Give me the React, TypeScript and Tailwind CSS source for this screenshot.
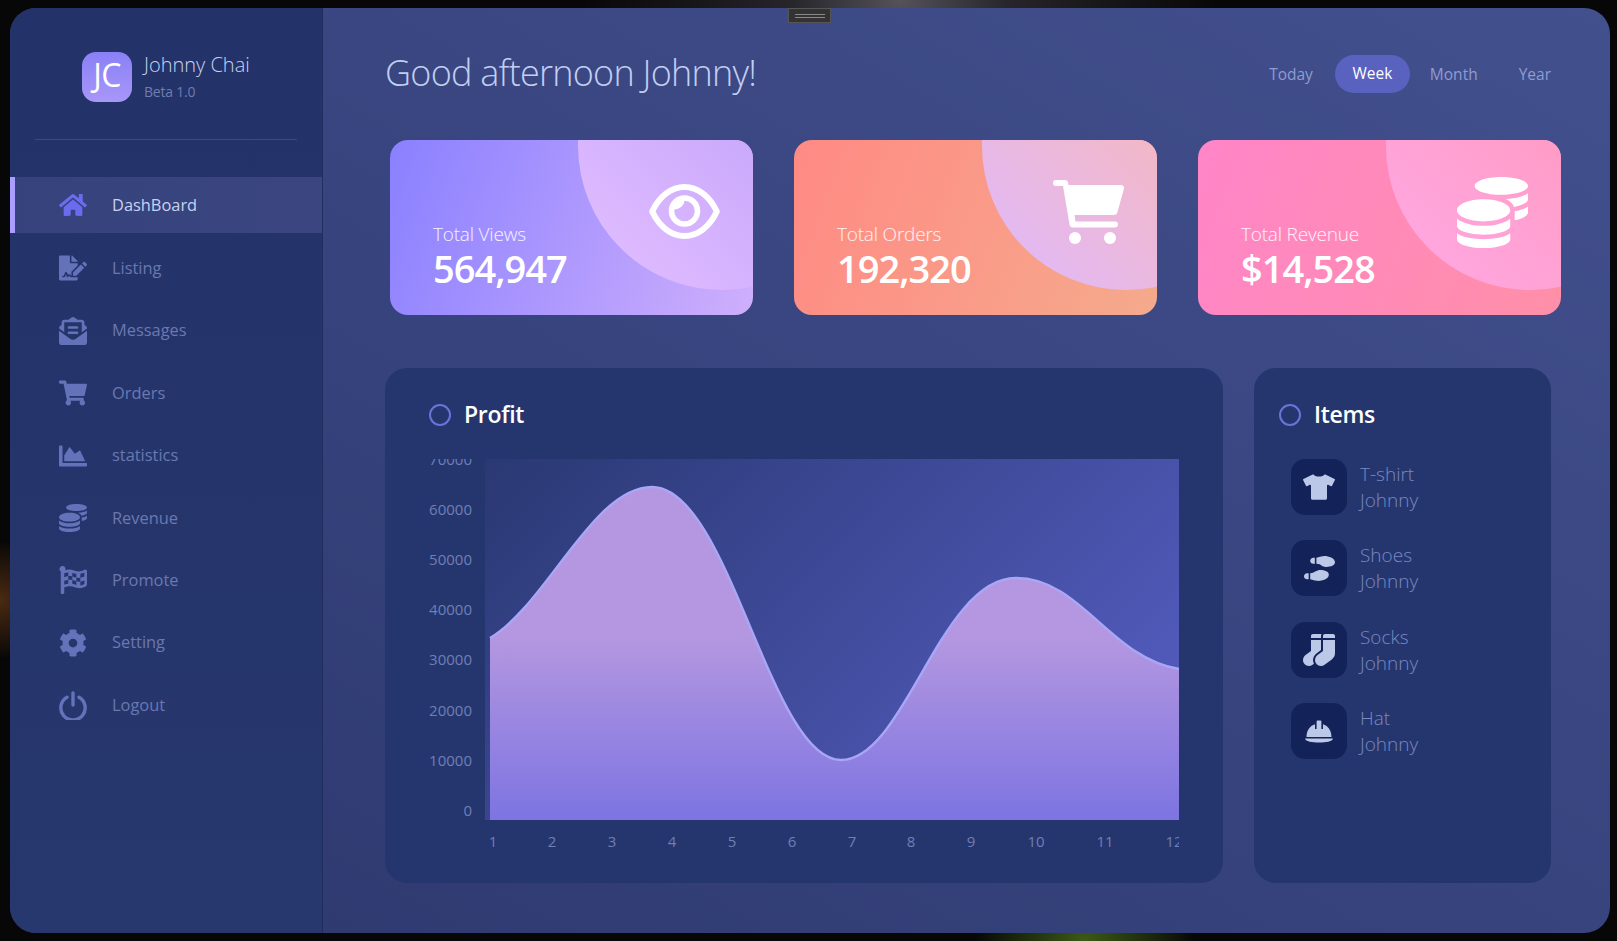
import type { ReactNode } from "react";
import {
  FaCog,
  FaCoins,
  FaChartArea,
  FaEnvelopeOpenText,
  FaFileSignature,
  FaFlagCheckered,
  FaHome,
  FaShoePrints,
  FaShoppingCart,
  FaSocks,
  FaTshirt,
} from "react-icons/fa";

const font = { fontFamily: '"Open Sans", "Noto Sans", sans-serif' };

function PowerIcon() {
  return (
    <svg width="28" height="29" viewBox="0 0 28 29" fill="none" stroke="currentColor" strokeWidth="3.4" strokeLinecap="round">
      <path d="M8 6.2a12.2 12.2 0 1 0 12 0" />
      <path d="M14 2v12" />
    </svg>
  );
}

function HatIcon() {
  return (
    <svg width="32" height="32" viewBox="0 0 32 32" fill="currentColor">
      <path d="M3.5 22C3.5 15 7.5 10.5 12 9.2V14h1.6V6.5a1 1 0 0 1 1-1h2.8a1 1 0 0 1 1 1V14H20V9.2C24.5 10.5 28.5 15 28.5 22Z" />
      <path d="M2 23.5H30C29.5 26.5 23 27.500 16 27.500S2.500 26.500 2 23.5Z" />
    </svg>
  );
}

const navItems = [
  { label: "DashBoard", icon: <FaHome size={28} /> },
  { label: "Listing", icon: <FaFileSignature size={28} /> },
  { label: "Messages", icon: <FaEnvelopeOpenText size={28} /> },
  { label: "Orders", icon: <FaShoppingCart size={28} /> },
  { label: "statistics", icon: <FaChartArea size={28} /> },
  { label: "Revenue", icon: <FaCoins size={28} /> },
  { label: "Promote", icon: <FaFlagCheckered size={28} /> },
  { label: "Setting", icon: <FaCog size={28} /> },
  { label: "Logout", icon: <PowerIcon /> },
];

const items = [
  { name: "T-shirt", icon: <FaTshirt size={32} /> },
  { name: "Shoes", icon: <FaShoePrints size={31} /> },
  { name: "Socks", icon: <FaSocks size={32} /> },
  { name: "Hat", icon: <HatIcon /> },
];

function EyeIcon() {
  return (
    <svg width="71" height="55" viewBox="0 0 71 55" fill="none" stroke="white">
      <path
        d="M3.2 27.5C10.5 12 22.5 3 35.5 3S60.5 12 67.8 27.5C60.5 43 48.5 52 35.5 52S10.5 43 3.2 27.5Z"
        strokeWidth="6"
        strokeLinejoin="round"
      />
      <circle cx="35.5" cy="27" r="13" strokeWidth="5.5" />
      <path d="M35.5 16C35.5 21 31 25.5 24.5 25.5L25 17Z" fill="white" stroke="none" />
    </svg>
  );
}

function CartIcon() {
  return (
    <svg width="71" height="64" viewBox="0 0 71 64" fill="white">
      <path d="M3 0H12a3 3 0 0 1 3 2.5L15.5 5H68a3 3 0 0 1 3 3.5L64.5 32a4 4 0 0 1-4 3H21.5L22.5 41.5H62a3 3 0 0 1 0 6H20a3.5 3.5 0 0 1-3.5-3L10 6H3a3 3 0 0 1 0-6Z" />
      <circle cx="22" cy="58" r="6" />
      <circle cx="57" cy="58" r="6" />
    </svg>
  );
}

function Sidebar() {
  return (
    <aside className="w-[313px] shrink-0 flex flex-col bg-gradient-to-b from-[#233268] to-[#27386f] border-r border-[#1f2d5f]">
      <div className="h-[131px] flex items-start pl-[72px] pt-[44px]">
        <div className="w-[50px] h-[50px] rounded-[14px] bg-gradient-to-b from-[#8a80f6] to-[#a897f9] flex items-center justify-center text-white text-[32px] font-medium leading-[44px] pb-[4px] tracking-[-0.5px]">
          JC
        </div>
        <div className="ml-3 -mt-px flex flex-col">
          <span className="text-[20px] leading-[28px] font-light text-[#c7d2f2]">Johnny Chai</span>
          <span className="text-[14px] leading-[25px] text-[#6f7db0] tracking-[-0.2px]">Beta 1.0</span>
        </div>
      </div>
      <div className="mx-[25px] h-px bg-[#3a4a80]" />
      <nav className="mt-[38px] flex flex-col gap-[6.4px]">
        {navItems.map((item, i) => (
          <div
            key={item.label}
            className={
              i === 0
                ? "h-14 -mt-px mb-px flex items-center border-l-[5px] border-[#a99dff] pl-[44px] bg-gradient-to-r from-[#35427c] to-[#3b4680] text-[#c7d2f2]"
                : "h-14 flex items-center pl-[49px] text-[#6b78b0]"
            }
          >
            <span className={`w-7 flex justify-center ${i === 0 ? "text-[#6a6cf0]" : "text-[#6472ba]"}`}>
              {item.icon}
            </span>
            <span className="ml-[25px] text-[16.4px]">{item.label}</span>
          </div>
        ))}
      </nav>
    </aside>
  );
}

function StatCard({
  label,
  value,
  card,
  circle,
  icon,
  iconClass,
}: {
  label: string;
  value: string;
  card: string;
  circle: string;
  icon: ReactNode;
  iconClass: string;
}) {
  return (
    <div className={`relative overflow-hidden h-[175px] w-[363px] rounded-[18px] ${card}`}>
      <div className={`absolute left-[188px] top-[-138px] w-[288px] h-[288px] rounded-full ${circle}`} />
      <div className={`absolute text-white ${iconClass}`}>{icon}</div>
      <div className="relative pl-[43px] pt-[82px] text-white">
        <div className="text-[19px] leading-[25px] font-light text-white/90 tracking-[-0.2px]">{label}</div>
        <div className="text-[38px] leading-[42px] font-[550] tracking-[-1px]">{value}</div>
      </div>
    </div>
  );
}

function PanelTitle({ children }: { children: ReactNode }) {
  return (
    <div className="flex items-center gap-[13px] h-[32px]">
      <span className="w-[22px] h-[22px] rounded-full border-[2.5px] border-[#6a74d8]" />
      <span className="text-[23px] mb-[2px] font-semibold text-white tracking-[-0.3px]">{children}</span>
    </div>
  );
}

function ProfitChart() {
  const yLabels = [70000, 60000, 50000, 40000, 30000, 20000, 10000, 0];
  const xLabels = [493, 552, 612, 672, 732, 792, 852, 911, 971, 1036, 1105, 1174];
  const curve =
    "M5 179C62 145 108 28 167 28C244 28 285 301 356 301C420 301 455 119 531 119C596 119 625 199 694 210";
  return (
    <svg width="838" height="420" viewBox="385 459 838 420" style={font}>
      <defs>
        <linearGradient id="plotBg" x1="0" y1="0" x2="1" y2="0.5">
          <stop offset="0" stopColor="#2a3873" />
          <stop offset="1" stopColor="#5059b8" />
        </linearGradient>
        <linearGradient id="areaFill" x1="0" y1="0" x2="0" y2="1">
          <stop offset="0" stopColor="#b497e0" />
          <stop offset="0.45" stopColor="#b497e0" />
          <stop offset="1" stopColor="#7d74e2" />
        </linearGradient>
        <clipPath id="plotClip">
          <rect x="385" y="459" width="794" height="420" />
        </clipPath>
      </defs>
      <g clipPath="url(#plotClip)" fontSize="15" fill="#707eb4">
        {yLabels.map((v, i) => (
          <text key={v} x="472" y={465 + i * 50.1} textAnchor="end">
            {v}
          </text>
        ))}
        {xLabels.map((x, i) => (
          <text key={x} x={x} y="847" textAnchor="middle">
            {i + 1}
          </text>
        ))}
      </g>
      <rect x="485" y="459" width="694" height="361" fill="url(#plotBg)" />
      <g transform="translate(485 459)">
        <path d={`${curve}V361H5Z`} fill="url(#areaFill)" />
        <path d={curve} fill="none" stroke="#aaa6f6" strokeWidth="2.4" />
      </g>
    </svg>
  );
}

export default function App() {
  return (
    <div
      className="relative w-[1617px] h-[941px] overflow-hidden pl-[10px] pt-2 bg-[#070707] bg-[radial-gradient(circle_at_900px_0px,#55525a_0px,#25252a_110px,transparent_320px),radial-gradient(circle_at_1085px_941px,#3c5a14_0px,transparent_110px),radial-gradient(circle_at_0px_600px,#4a2a12_0px,transparent_60px)]"
      style={font}
    >
      <div className="relative flex w-[1600px] h-[925px] rounded-[26px] overflow-hidden bg-gradient-to-tr from-[#2d386e] to-[#42508e]">
        <Sidebar />
        <main className="flex-1 pl-[62px] pr-[49px]">
          <header className="flex items-center justify-between h-[132px] pb-[2px]">
            <h1 className="text-[36px] font-light text-[#c2cff2] tracking-[-0.75px]">Good afternoon Johnny!</h1>
            <div className="flex items-center mt-[2px] mr-[10px] text-[15.5px] text-[#8e9cd2]">
              <span className="pr-[22px] mt-[2px]">Today</span>
              <span className="h-[38px] w-[75px] flex items-center justify-center rounded-full bg-[#5a62c0] text-white">
                Week
              </span>
              <span className="pl-5 pr-[41px] mt-[2px]">Month</span>
              <span className="mt-[2px]">Year</span>
            </div>
          </header>
          <div className="flex gap-[41px] pl-[5px] -mr-[10px]">
            <StatCard
              label="Total Views"
              value="564,947"
              card="bg-[linear-gradient(110deg,#8a80ff,#cfaffc)]"
              circle="bg-[linear-gradient(45deg,#ddb9ff_15%,#c8a8fb_60%)]"
              icon={<EyeIcon />}
              iconClass="left-[259px] top-[44px]"
            />
            <StatCard
              label="Total Orders"
              value="192,320"
              card="bg-[linear-gradient(110deg,#ff8a84,#f5aa8c)]"
              circle="bg-[linear-gradient(45deg,#e4b9f0_15%,#f4b8c4_60%)]"
              icon={<CartIcon />}
              iconClass="left-[259px] top-[40px]"
            />
            <StatCard
              label="Total Revenue"
              value="$14,528"
              card="bg-[linear-gradient(110deg,#ff85c8,#ff8fa8)]"
              circle="bg-[linear-gradient(45deg,#ffa6de_15%,#ff9bc4_60%)]"
              icon={<FaCoins size={71} />}
              iconClass="left-[259px] top-[37px]"
            />
          </div>
          <div className="flex gap-[31px] mt-[53px]">
            <section className="w-[838px] h-[515px] rounded-[22px] bg-[#25366f]">
              <div className="pl-[44px] pt-[31px] h-[91px]">
                <PanelTitle>Profit</PanelTitle>
              </div>
              <ProfitChart />
            </section>
            <section className="w-[297px] h-[515px] rounded-[22px] bg-[#25366f]">
              <div className="pl-[25px] pt-[31px] h-[91px]">
                <PanelTitle>Items</PanelTitle>
              </div>
              <div className="pl-[37px] flex flex-col gap-[25.4px]">
                {items.map((item) => (
                  <div key={item.name} className="flex items-center gap-[13px]">
                    <div className="w-14 h-14 rounded-[14px] bg-[#14225a] flex items-center justify-center text-[#bcc8e8]">
                      {item.icon}
                    </div>
                    <div className="text-[19px] leading-[26px] font-light text-[#7a88c0]">
                      <div>{item.name}</div>
                      <div>Johnny</div>
                    </div>
                  </div>
                ))}
              </div>
            </section>
          </div>
        </main>
      </div>
      <div className="absolute left-[788px] top-2 w-[43px] h-[15px] bg-[#333333] border border-[#555555] flex flex-col items-center justify-center gap-[2px]">
        <span className="w-[30px] h-px bg-[#8a8a8a]" />
        <span className="w-[30px] h-px bg-[#8a8a8a]" />
      </div>
    </div>
  );
}
